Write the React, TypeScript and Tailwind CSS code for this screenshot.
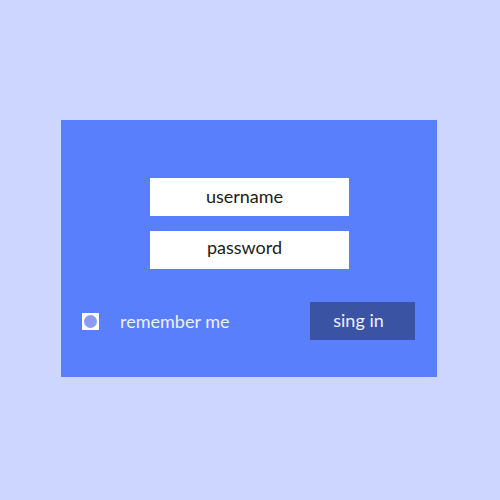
export default function App() {
  return (
    <div
      className="w-[500px] h-[500px] bg-[#cdd6fe] pt-[120px] pl-[61px]"
      style={{ fontFamily: "Lato, 'Noto Sans', sans-serif" }}
    >
      <div className="w-[376px] h-[257px] bg-[#5a7ffd] flex flex-col pt-[58px]">
        <div className="flex flex-col items-center gap-[15px]">
          <div className="w-[199px] h-[38px] bg-white flex items-center justify-center pr-[9px] pb-[2px] text-[18px] text-[#1b1b1b]">
            username
          </div>
          <div className="w-[199px] h-[38px] bg-white flex items-center justify-center pr-[9px] pb-[5px] text-[18px] text-[#1b1b1b]">
            password
          </div>
        </div>
        <div className="mt-[33px] flex items-center pl-[21px] pr-[22px]">
          <div className="w-[17px] h-[17px] bg-white flex items-center justify-center">
            <div className="w-[13px] h-[13px] rounded-full bg-[#8a9cf6]" />
          </div>
          <span className="ml-[21px] text-[18px] text-[#eef1ff]">
            remember me
          </span>
          <div className="ml-auto w-[105px] h-[38px] bg-[#3a53a2] flex items-center justify-center pr-[8px] pb-[2px] text-[18px] text-[#eef1ff]">
            sing in
          </div>
        </div>
      </div>
    </div>
  );
}
